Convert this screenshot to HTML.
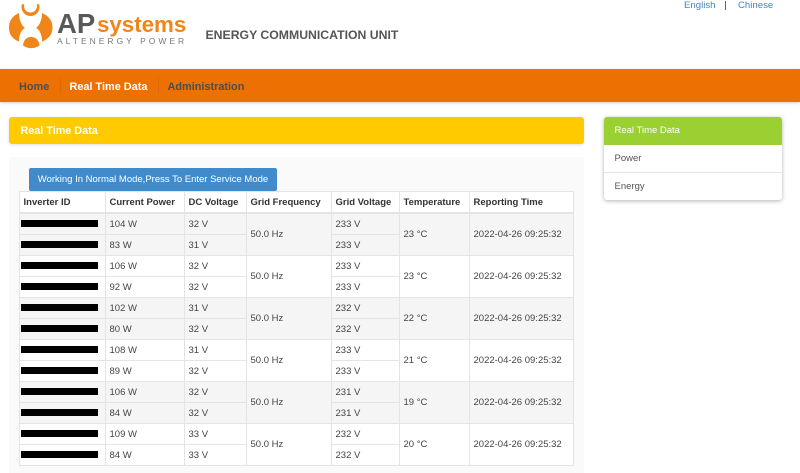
<!DOCTYPE html>
<html><head><meta charset="utf-8">
<style>
html,body{margin:0;padding:0;width:800px;height:473px;overflow:hidden;background:#fff;font-family:"Liberation Sans",sans-serif;color:#444}
.a{position:absolute;white-space:nowrap}
#nav{left:0;top:69px;width:800px;height:33px;background:#ed7102;box-shadow:0 1px 3px rgba(0,0,0,.2)}
.n{top:79.500px;font-size:10.900px;font-weight:bold;line-height:14px}
.sep{top:78px;width:1px;height:16px;background:#dd6a04}
#t{left:19px;top:191px;border-collapse:collapse;table-layout:fixed;width:554px;font-size:9.5px;color:#444;background:#fff}
#t td,#t th{border:1px solid #e4e4e4;padding:1px 0 0 3.5px;height:19px;text-align:left;box-sizing:content-box;white-space:nowrap;overflow:hidden}
#t th{height:18.5px;border-bottom:2px solid #e4e4e4;font-weight:bold;color:#333;padding-left:3.5px}
#t tbody tr.o td{background:#f5f5f5}
.bar{display:block;width:77px;height:7.5px;background:#000;margin:-1px 0 0 -2.5px}
.side{left:604px;width:178px;font-size:9.5px;color:#555}
</style></head><body>
<svg class="a" style="left:0;top:0" width="60" height="55" viewBox="0 0 60 55">
<path fill="#f08519" d="M19 13C12 16 9 21 9 27.500S12 39 19 41.500C19 35 21 30 25 28C21 25 19 19 19 13Z"/>
<path fill="#f08519" d="M42 13C49 16 52.500 21 52.500 27.500S49 39 42 41.500C42 35 40 30 36 28C40 25 42 19 42 13Z"/>
<circle cx="30.500" cy="7" r="9" fill="#f08519"/>
<circle cx="30.500" cy="6" r="6.500" fill="#fff"/>
<rect x="18" y="0" width="25" height="4.200" fill="#fff"/>
<path fill="#f08519" d="M23 45.500C23.500 40 26.500 37 31 37S39 40 39.500 45.500C34.500 49 28 49 23 45.500Z"/>
</svg>
<div class="a" style="left:57px;top:6.600px;font-size:27.500px;font-weight:bold;color:#58595b;line-height:34px">AP</div>
<div class="a" style="left:97px;top:11.200px;font-size:22.300px;font-weight:bold;color:#f08519;line-height:28px">systems</div>
<div class="a" style="left:57px;top:35.500px;font-size:8.500px;color:#7a7a7a;letter-spacing:3px;line-height:10px">ALTENERGY POWER</div>
<div class="a" style="left:205.500px;top:28px;font-size:12.250px;font-weight:bold;color:#555;line-height:15px">ENERGY COMMUNICATION UNIT</div>
<div class="a" style="left:684px;top:0;font-size:9.600px;color:#3f87c9;line-height:12px">English</div>
<div class="a" style="left:724.500px;top:1px;width:1px;height:9px;background:#666"></div>
<div class="a" style="left:738px;top:0;font-size:9.600px;color:#3f87c9;line-height:12px">Chinese</div>

<div class="a" id="nav"></div>
<div class="a n" style="left:19px;color:#4d4d4d">Home</div>
<div class="a sep" style="left:60px"></div>
<div class="a n" style="left:69.500px;color:#fff">Real Time Data</div>
<div class="a sep" style="left:157.500px"></div>
<div class="a n" style="left:167.500px;color:#4d4d4d">Administration</div>

<div class="a" style="left:9px;top:117px;width:575px;height:27px;background:#ffcb00;border-radius:3px;box-shadow:0 1px 3px rgba(0,0,0,.12)"></div>
<div class="a" style="left:20.500px;top:124px;font-size:10.800px;font-weight:bold;color:#fff;line-height:14px">Real Time Data</div>

<div class="a" style="left:9px;top:157px;width:575px;height:316px;background:#fafafa"></div>
<div class="a" style="left:29px;top:168px;width:248px;height:23px;background:#428bca;border:0;border-radius:2px;color:#fff;font-size:9.500px;line-height:24px;text-align:center">Working In Normal Mode,Press To Enter Service Mode</div>

<table class="a" id="t">
<colgroup><col style="width:86px"><col style="width:79px"><col style="width:62px"><col style="width:85px"><col style="width:68px"><col style="width:70px"><col style="width:104px"></colgroup>
<thead><tr><th>Inverter ID</th><th>Current Power</th><th>DC Voltage</th><th>Grid Frequency</th><th>Grid Voltage</th><th>Temperature</th><th>Reporting Time</th></tr></thead>
<tbody>
<tr class="o"><td><span class="bar"></span></td><td>104 W</td><td>32 V</td><td rowspan="2">50.0 Hz</td><td>233 V</td><td rowspan="2">23 °C</td><td rowspan="2">2022-04-26 09:25:32</td></tr>
<tr class="o"><td><span class="bar"></span></td><td>83 W</td><td>31 V</td><td>233 V</td></tr>
<tr><td><span class="bar"></span></td><td>106 W</td><td>32 V</td><td rowspan="2">50.0 Hz</td><td>233 V</td><td rowspan="2">23 °C</td><td rowspan="2">2022-04-26 09:25:32</td></tr>
<tr><td><span class="bar"></span></td><td>92 W</td><td>32 V</td><td>233 V</td></tr>
<tr class="o"><td><span class="bar"></span></td><td>102 W</td><td>31 V</td><td rowspan="2">50.0 Hz</td><td>232 V</td><td rowspan="2">22 °C</td><td rowspan="2">2022-04-26 09:25:32</td></tr>
<tr class="o"><td><span class="bar"></span></td><td>80 W</td><td>32 V</td><td>232 V</td></tr>
<tr><td><span class="bar"></span></td><td>108 W</td><td>31 V</td><td rowspan="2">50.0 Hz</td><td>233 V</td><td rowspan="2">21 °C</td><td rowspan="2">2022-04-26 09:25:32</td></tr>
<tr><td><span class="bar"></span></td><td>89 W</td><td>32 V</td><td>233 V</td></tr>
<tr class="o"><td><span class="bar"></span></td><td>106 W</td><td>32 V</td><td rowspan="2">50.0 Hz</td><td>231 V</td><td rowspan="2">19 °C</td><td rowspan="2">2022-04-26 09:25:32</td></tr>
<tr class="o"><td><span class="bar"></span></td><td>84 W</td><td>32 V</td><td>231 V</td></tr>
<tr><td><span class="bar"></span></td><td>109 W</td><td>33 V</td><td rowspan="2">50.0 Hz</td><td>232 V</td><td rowspan="2">20 °C</td><td rowspan="2">2022-04-26 09:25:32</td></tr>
<tr><td><span class="bar"></span></td><td>84 W</td><td>33 V</td><td>232 V</td></tr>
</tbody></table>

<div class="a side" style="top:117px;height:83px;background:#fff;border-radius:3px;box-shadow:0 1px 4px rgba(0,0,0,.3)"></div>
<div class="a side" style="top:117px;height:28px;background:#9bd032;border-radius:3px 3px 0 0;color:#fff;line-height:28px;text-indent:10.500px">Real Time Data</div>
<div class="a side" style="top:145px;height:27px;line-height:28px;text-indent:10.500px;border-bottom:1px solid #e4e4e4">Power</div>
<div class="a side" style="top:173px;height:27px;line-height:28px;text-indent:10.500px">Energy</div>
</body></html>
